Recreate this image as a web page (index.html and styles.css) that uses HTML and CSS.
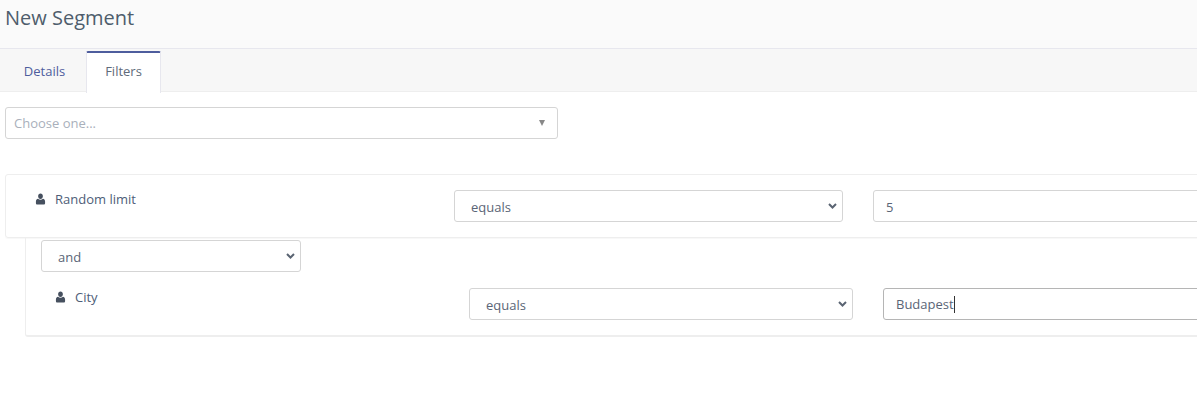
FILE: index.html
```html
<!DOCTYPE html>
<html lang="en">
<head>
<meta charset="utf-8">
<title>New Segment</title>
<link rel="stylesheet" href="styles.css">
</head>
<body>
<div class="page">
  <header class="page-header"><h1>New Segment</h1></header>
  <nav class="tabs">
    <a class="tab">Details</a>
    <a class="tab active">Filters</a>
  </nav>
  <main class="content">
    <div class="chooser">
      <span>Choose one...</span>
      <i class="caret"></i>
    </div>
    <section class="filter first">
      <div class="filter-label">
        <svg class="user" viewBox="0 0 12 13" aria-hidden="true"><path d="M6 .5c1.500 0 2.600 1.200 2.600 2.900S7.500 6.500 6 6.500 3.400 5.100 3.400 3.400 4.500.5 6 .5zM3.300 6.300C4 7 5 7.400 6 7.400s2-.4 2.700-1.100c1.500.2 2.300 1.400 2.300 3.200v1.500c0 1-.6 1.500-1.500 1.500h-7C1.600 12.500 1 12 1 11V9.500c0-1.800.8-3 2.300-3.200z"/></svg>
        <span>Random limit</span>
      </div>
      <select class="field"><option>equals</option></select>
      <input class="field" type="text" value="5">
    </section>
    <section class="group">
      <select class="field glue"><option>and</option></select>
      <div class="filter second">
        <div class="filter-label">
          <svg class="user" viewBox="0 0 12 13" aria-hidden="true"><path d="M6 .5c1.500 0 2.600 1.200 2.600 2.900S7.500 6.500 6 6.500 3.400 5.100 3.400 3.400 4.500.5 6 .5zM3.300 6.300C4 7 5 7.400 6 7.400s2-.4 2.700-1.100c1.500.2 2.300 1.400 2.300 3.200v1.500c0 1-.6 1.500-1.500 1.500h-7C1.600 12.500 1 12 1 11V9.500c0-1.800.8-3 2.300-3.200z"/></svg>
          <span>City</span>
        </div>
        <select class="field"><option>equals</option></select>
        <div class="field focused"><span>Budapest</span><i class="cursor"></i></div>
      </div>
    </section>
  </main>
</div>
</body>
</html>
```
FILE: styles.css
```css
* { box-sizing: border-box; }
html, body { margin: 0; height: 100%; background: #fff; overflow: hidden; }
body { font-family: "Open Sans", sans-serif; font-size: 13px; color: #4e5d78; }
.page { width: 1197px; height: 416px; overflow: hidden; }
.page-header { height: 49px; padding: 4px 5px 0; background: #fafafa; border-bottom: 1px solid #e7e7ee; }
h1 { margin: 0; font-size: 20px; line-height: 27px; font-weight: 400; color: #4e5d6c; }
.tabs { display: flex; height: 43px; padding-top: 2px; padding-left: 5px; background: #f7f7f7; border-bottom: 1px solid #eeeeee; }
.tab { width: 81px; height: 41px; padding-right: 2px; line-height: 41px; text-align: center; color: #4e5d9d; }
.tab.active { width: 75px; height: 42px; margin-bottom: -1px; padding-right: 0; background: #fff; border: 1px solid #e7e7ee; border-bottom: 0; border-top: 2px solid #4e5d9d; border-radius: 2px 2px 0 0; line-height: 37px; color: #5f6b7a; }
.content { padding: 15px 0 0 5px; }
.chooser { display: flex; justify-content: space-between; align-items: center; width: 553px; height: 32px; padding: 0 12px 0 8px; border: 1px solid #d5d5d5; border-radius: 3px; color: #a9b0bb; }
.caret { width: 0; height: 0; border-left: 3.500px solid transparent; border-right: 3.500px solid transparent; border-top: 6px solid #888; }
.filter { display: grid; align-items: start; }
.first { margin-top: 35px; width: 1300px; height: 64px; padding: 15px 0 0 29px; grid-template-columns: 419px 389px 1fr; border: 1px solid #eeeeee; border-radius: 3px; box-shadow: 0 1px 1px rgba(0,0,0,.03); }
.first .field:last-child { margin-left: 30px; }
.group { margin-left: 20px; width: 1300px; height: 99px; padding-top: 2px; border-left: 1px solid #eeeeee; border-bottom: 2px solid #eeeeee; border-radius: 0 0 0 3px; }
.second { margin-top: 16px; padding-left: 29px; grid-template-columns: 414px 384px 1fr; }
.second .field:last-child { margin-left: 30px; }
.filter-label { display: flex; align-items: center; gap: 9px; height: 18px; color: #4e5d78; }
.user { width: 11px; height: 12px; fill: #46505f; }
.field { height: 32px; font: inherit; line-height: 28px; color: #5a6576; background: #fff; border: 1px solid #d5d5d5; border-radius: 3px; outline: 0; }
select.field { appearance: none; padding: 2px 0 0 16px; background: #fff url("data:image/svg+xml,%3Csvg xmlns='http://www.w3.org/2000/svg' width='9' height='6'%3E%3Cpath d='M1 1l3.500 3.500L8 1' fill='none' stroke='%235a6472' stroke-width='2'/%3E%3C/svg%3E") no-repeat right 5px center; }
input.field { padding: 1px 12px 0; }
.glue { display: block; width: 260px; margin-left: 15px; }
.focused { display: flex; align-items: center; padding: 0 12px; border-color: #b5b5b5; }
.cursor { width: 1px; height: 17px; background: #333; }
```
